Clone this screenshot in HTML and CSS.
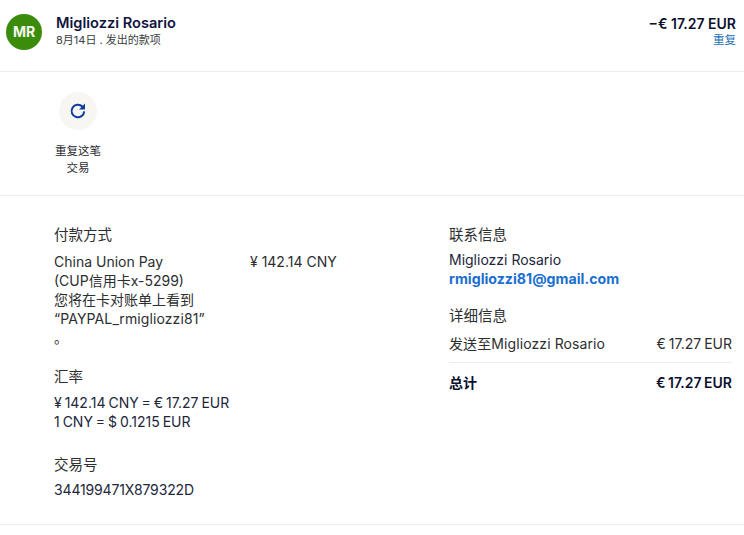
FILE: index.html
```html
<!DOCTYPE html>
<html lang="zh">
<head>
  <meta charset="UTF-8">
  <title>交易详情</title>
  <meta name="viewport" content="width=device-width, initial-scale=1.0"/>
  <link rel="stylesheet" href="styles.css">
</head>
<body>

<header class="summary">
  <div class="avatar">MR</div>
  <div class="summary-info">
    <div class="name">Migliozzi Rosario</div>
    <div class="date">8月14日 . 发出的款项</div>
  </div>
  <div class="summary-amount">
    <div class="amount">−€ 17.27 EUR</div>
    <a class="repeat-link" href="#">重复</a>
  </div>
</header>

<section class="actions">
  <div class="action">
    <div class="action-icon">
      <svg width="18" height="18" viewBox="0 0 18 18" fill="none">
        <path d="M15.2 9.4a6.3 6.3 0 1 1-1.9-4.9L15 6.3" stroke="#0f3d9e" stroke-width="2"/>
        <path d="M16 1.6v6h-6z" fill="#0f3d9e"/>
      </svg>
    </div>
    <div class="action-label">重复这笔<br>交易</div>
  </div>
</section>

<section class="details">
  <div class="col-left">
    <h3 class="label">付款方式</h3>
    <div class="pay-row">
      <div class="pay-text">China Union Pay<br>(CUP信用卡x-5299)<br>您将在卡对账单上看到<br><span class="descriptor">“PAYPAL_rmigliozzi81”</span><br>。</div>
      <div class="pay-amount">¥ 142.14 CNY</div>
    </div>
    <h3 class="label rate-label">汇率</h3>
    <div class="text rate-text">¥ 142.14 CNY = € 17.27 EUR<br>1 CNY = $ 0.1215 EUR</div>
    <h3 class="label txn-label">交易号</h3>
    <div class="text txn-text">344199471X879322D</div>
  </div>
  <div class="col-right">
    <h3 class="label">联系信息</h3>
    <div class="text contact-text">Migliozzi Rosario<br><a class="email" href="#">rmigliozzi81@gmail.com</a></div>
    <h3 class="label detail-label">详细信息</h3>
    <div class="line-item">
      <span class="recipient">发送至Migliozzi Rosario</span>
      <span class="price">€ 17.27 EUR</span>
    </div>
    <div class="line-item total">
      <span>总计</span>
      <span class="price">€ 17.27 EUR</span>
    </div>
  </div>
</section>

</body>
</html>
```

FILE: styles.css
```css
body {
  margin: 0;
  font-family: Inter, "Noto Sans CJK SC", sans-serif;
  font-size: 14px;
  line-height: 19px;
  background: #fff;
  color: #2c2e2f;
}
a {
  text-decoration: none;
}
.summary {
  display: flex;
  align-items: flex-start;
  padding: 14px 8px 0 6px;
  height: 57px;
  border-bottom: 1px solid #ececec;
}
.avatar {
  width: 36px;
  height: 36px;
  border-radius: 50%;
  background: #3c8c0c;
  color: #f4f8ee;
  font-size: 14px;
  font-weight: 700;
  line-height: 36px;
  text-align: center;
}
.summary-info {
  flex: 1;
  margin-left: 14px;
}
.name {
  color: #10143f;
  font-size: 14.6px;
  font-weight: 600;
  line-height: 19px;
}
.date {
  font-size: 11px;
  line-height: 15px;
  color: #3a3c3e;
}
.summary-amount {
  text-align: right;
}
.amount {
  color: #0b1030;
  font-size: 14px;
  font-weight: 600;
  line-height: 19px;
}
.repeat-link {
  display: block;
  color: #1a6fb5;
  font-size: 11.5px;
  line-height: 15px;
}
.actions {
  height: 123px;
  border-bottom: 1px solid #ececec;
  padding-left: 49px;
}
.action {
  width: 58px;
  padding-top: 20px;
  text-align: center;
}
.action-icon {
  display: flex;
  align-items: center;
  justify-content: center;
  width: 38px;
  height: 38px;
  margin: 0 auto 13px;
  border-radius: 50%;
  background: #f8f6f3;
}
.action-label {
  font-size: 11.5px;
  line-height: 17px;
  color: #2a2c30;
}
.details {
  display: flex;
  height: 299px;
  padding: 29px 12px 0 54px;
  border-bottom: 1px solid #ececec;
}
.col-left {
  width: 395px;
}
.col-right {
  flex: 1;
}
.label {
  margin: 0;
  font-size: 14.5px;
  font-weight: 400;
  line-height: 19px;
}
.text {
  margin-top: 9px;
  color: #22263a;
}
.pay-row {
  display: flex;
  margin-top: 8px;
}
.pay-text {
  width: 196px;
}
.descriptor {
  letter-spacing: 0.1px;
}
.rate-label {
  margin-top: 20px;
}
.rate-text {
  margin-top: 7px;
  word-spacing: -1px;
}
.txn-label {
  margin-top: 24px;
}
.txn-text {
  margin-top: 6px;
  letter-spacing: -0.15px;
}
.contact-text {
  margin-top: 6px;
}
.email {
  color: #1a6fd0;
  font-weight: 700;
  font-size: 14.2px;
}
.detail-label {
  margin-top: 18px;
}
.line-item {
  display: flex;
  justify-content: space-between;
  margin-top: 9px;
  padding-bottom: 9px;
  border-bottom: 1px solid #ececec;
}
.recipient {
  letter-spacing: 0.1px;
}
.price {
  word-spacing: -1px;
}
.total {
  margin-top: 10px;
  padding-bottom: 0;
  border-bottom: none;
  color: #0b1030;
  font-weight: 600;
}
```
